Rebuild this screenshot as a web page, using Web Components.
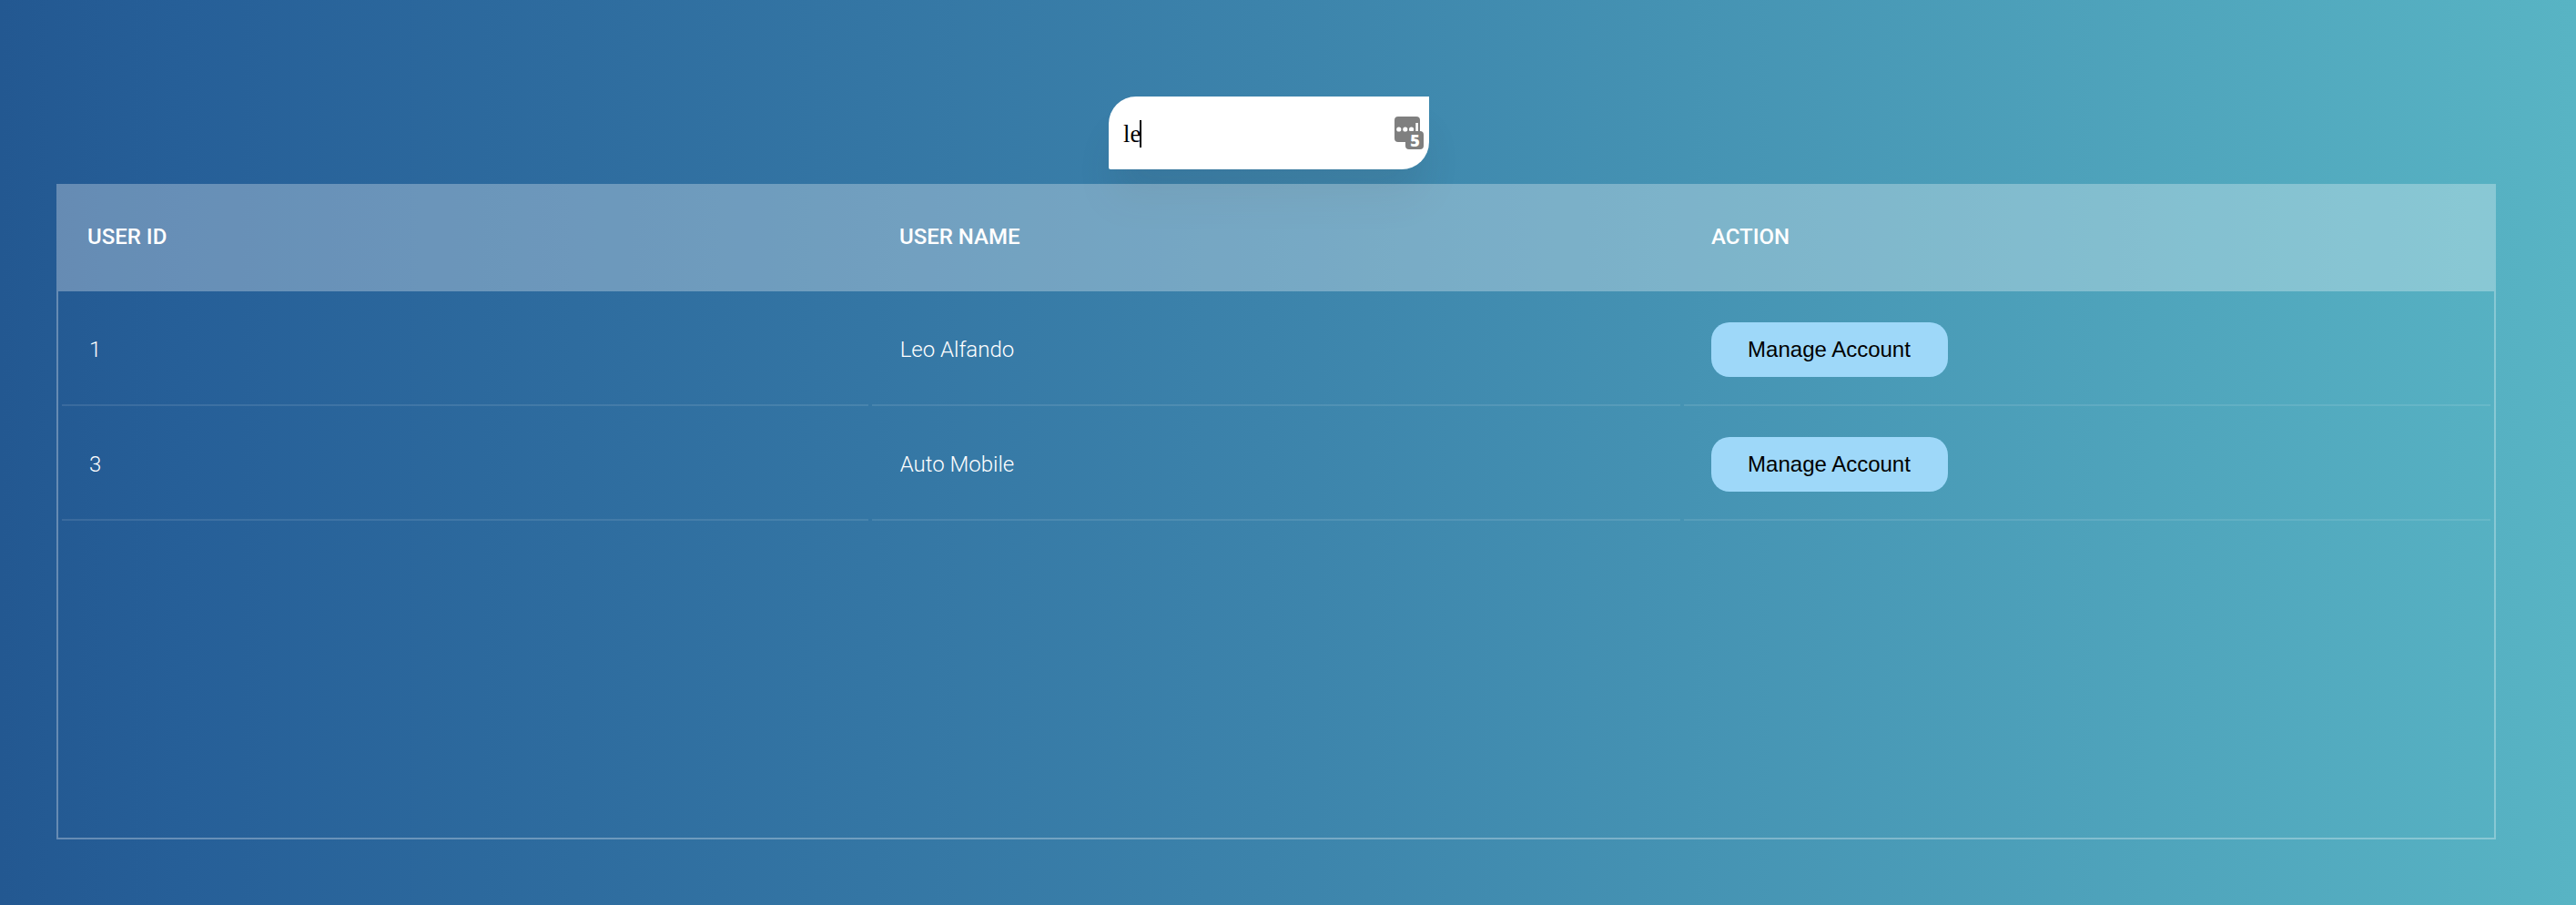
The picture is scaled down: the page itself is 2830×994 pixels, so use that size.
<!DOCTYPE html>
<html lang="en">
<head>
<meta charset="utf-8">
<title>User accounts</title>
<style>
html,body{margin:0;height:100%}
body{background:linear-gradient(to right,#235891,#265f98 7%,#3c83ab 49%,#58b4c4);overflow:hidden}
</style>
</head>
<body>
<account-page></account-page>
<script>
function define(name, html){
  const t=document.createElement('template');t.innerHTML=html;
  customElements.define(name,class extends HTMLElement{
    constructor(){super();this.attachShadow({mode:'open'}).append(t.content.cloneNode(true));}
  });
}
define('vault-badge',`<style>:host{display:block;width:32px;height:36px}svg{display:block;overflow:visible}text{font:800 18px "Open Sans",sans-serif}</style>
<svg width="32" height="36" viewBox="0 0 32 36"><rect width="28" height="28" rx="4" fill="#7f7f7f"/><g fill="#fff"><circle cx="4.8" cy="14" r="2.6"/><circle cx="11.8" cy="14" r="2.6"/><circle cx="18.6" cy="14" r="2.6"/><rect x="23.3" y="7" width="2.6" height="10"/></g><rect x="12" y="16" width="20" height="20" rx="4" fill="#7f7f7f"/><text x="17.3" y="33" fill="#fff">5</text></svg>`);
define('search-box',`<style>
:host{display:flex;align-items:center;box-sizing:border-box;width:352px;height:80px;padding:0 6px 0 16px;background:#fff;border-radius:30px 0 30px 2px;box-shadow:0 36px 40px -6px rgba(46,56,64,.12);color:#000;font:26.67px/30px "Liberation Serif",serif}
span,i{margin-top:2px}
i{width:2px;height:30px;background:#000;margin-left:-1px}
vault-badge{margin-left:auto}
</style><span><slot></slot></span><i></i><vault-badge></vault-badge>`);
define('pill-button',`<style>
:host{display:inline-flex;vertical-align:middle}
button{width:260px;height:60px;padding:0 1px 0 0;border:0;border-radius:20px;background:#9ed8f9;color:#000;font:24px "Liberation Sans",sans-serif}
</style><button><slot></slot></button>`);
define('table-row',`<style>
:host{display:grid;grid-template-columns:886px 888px 886px;gap:4px;padding:0 4px;height:122px;margin-top:4px;color:#fff;font:300 24px Roboto,sans-serif}
div{display:flex;align-items:center;padding-left:30px;border-bottom:2px solid rgba(255,255,255,.1)}
:host(:not([head])) div:nth-of-type(2){padding-left:30.67px}
:host([head]){grid-template-columns:repeat(3,1fr);height:110px;margin:0;padding:4px;background:rgba(255,255,255,.3);font-weight:500;text-transform:uppercase}
:host([head]) div{border:0;padding-bottom:2px}
</style><div><slot name="id"></slot></div><div><slot name="name"></slot></div><div><slot name="action"></slot></div>`);
define('table-body',`<style>:host{display:block;box-sizing:border-box;height:602px;border:2px solid rgba(255,255,255,.3);border-top:0}</style><slot></slot>`);
define('account-page',`<style>
:host{display:flex;flex-direction:column;box-sizing:border-box;height:994px;padding:106px 88px 0 62px}
search-box{margin:0 0 16px 1156px}
</style>
<search-box>le</search-box>
<table-row head><span slot="id">User ID</span><span slot="name">User Name</span><span slot="action">Action</span></table-row>
<table-body>
<table-row><span slot="id">1</span><span slot="name">Leo Alfando</span><pill-button slot="action">Manage Account</pill-button></table-row>
<table-row><span slot="id">3</span><span slot="name">Auto Mobile</span><pill-button slot="action">Manage Account</pill-button></table-row>
</table-body>`);
</script>
</body>
</html>
